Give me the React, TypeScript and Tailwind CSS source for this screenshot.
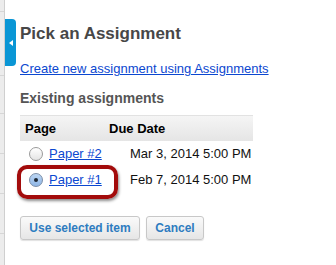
import { FC } from "react";

const font = { fontFamily: '"Liberation Sans", Arial, sans-serif' };

export default function App() {
  return (
    <div
      className="w-[336px] h-[265px] bg-white flex overflow-hidden"
      style={font}
    >
      <SideStrip />
      <div className="w-[11px] shrink-0 pt-[19px]">
        <div className="h-[47px] bg-[#0a96d5] rounded-r-[4px] flex items-center justify-center">
          <div className="w-0 h-0 border-y-[3px] border-y-transparent border-r-[4px] border-r-white"></div>
        </div>
      </div>
      <div className="flex-1 pl-[4px] pt-[24px]">
        <h1 className="text-[17px] leading-[20px] font-bold text-[#474747]">
          Pick an Assignment
        </h1>
        <a className="block mt-[17px] text-[13px] leading-[16px] text-[#0b47d0] underline">
          Create new assignment using Assignments
        </a>
        <h2 className="mt-[13px] text-[14px] leading-[17px] font-bold text-[#555]">
          Existing assignments
        </h2>
        <AssignmentTable />
        <div className="flex gap-[6px] mt-[23px]">
          <Button label="Use selected item" width="w-[120px]" />
          <Button label="Cancel" width="w-[58px]" />
        </div>
      </div>
    </div>
  );
}

const SideStrip: FC = () => {
  return (
    <div className="w-[5px] shrink-0 bg-[#ececec] border-r border-[#cfcfcf] flex flex-col">
      <div className="h-[12px] border-b border-[#d6d6d6]"></div>
      <div className="h-[64px] border-b border-[#d6d6d6]"></div>
      <div className="h-[38px] border-b border-[#d6d6d6]"></div>
      <div className="h-[40px] border-b border-[#d6d6d6]"></div>
      <div className="h-[40px] border-b border-[#d6d6d6]"></div>
      <div className="h-[40px] border-b border-[#d6d6d6]"></div>
    </div>
  );
};

const AssignmentTable: FC = () => {
  return (
    <div className="mt-[8px] w-[233px] text-[13px]">
      <div className="h-[26px] flex items-center bg-gradient-to-b from-[#f5f5f5] to-[#e5e5e5] border-t border-[#e2e2e2] font-bold text-black leading-[26px]">
        <div className="w-[89px] pl-[5px]">Page</div>
        <div>Due Date</div>
      </div>
      <Row title="Paper #2" date="Mar 3, 2014 5:00 PM" />
      <div className="relative">
        <Row title="Paper #1" date="Feb 7, 2014 5:00 PM" selected />
        <div className="absolute left-[-3px] top-[-2px] w-[101px] h-[34px] border-[4px] border-[#a30c0c] rounded-[10px] shadow-[1px_2px_3px_rgba(0,0,0,0.45)]"></div>
      </div>
    </div>
  );
};

type RowProps = {
  title: string;
  date: string;
  selected?: boolean;
};
const Row: FC<RowProps> = ({ title, date, selected }) => {
  return (
    <div className="h-[26px] flex items-center leading-[26px]">
      <div className="w-[110px] flex items-center pl-[9px]">
        <Radio selected={selected} />
        <a className="ml-[6px] text-[#0b47d0] underline">{title}</a>
      </div>
      <div className="text-[#111]">{date}</div>
    </div>
  );
};

const Radio: FC<{ selected?: boolean }> = ({ selected }) => {
  if (selected) {
    return (
      <div className="w-[14px] h-[14px] rounded-full border border-[#7a8ea8] bg-gradient-to-b from-[#bcd6f3] to-[#8fb6e6] flex items-center justify-center">
        <div className="w-[4px] h-[4px] rounded-full bg-[#1c2733]"></div>
      </div>
    );
  }
  return (
    <div className="w-[14px] h-[14px] rounded-full border border-[#9a9a9a] bg-gradient-to-b from-[#ffffff] to-[#e4e4e4]"></div>
  );
};

const Button: FC<{ label: string; width: string }> = ({ label, width }) => {
  return (
    <button
      className={`${width} h-[24px] rounded-[3px] border border-[#c8c8c8] bg-gradient-to-b from-[#fafafa] to-[#e6e6e6] shadow-[0_1px_1px_rgba(0,0,0,0.12)] text-[12px] font-bold text-[#2e7cc0] leading-[22px]`}
    >
      {label}
    </button>
  );
};
